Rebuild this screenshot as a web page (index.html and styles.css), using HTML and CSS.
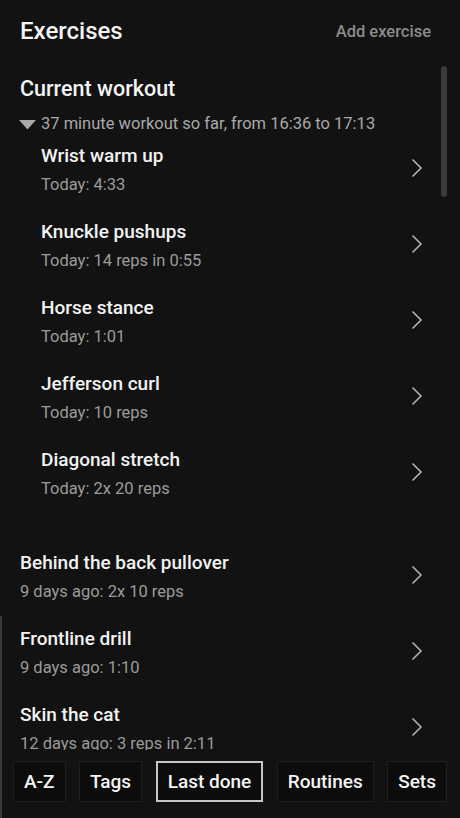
FILE: index.html
```html
<!DOCTYPE html>
<html>
  <head>
    <title>Exercises</title>
    <link rel="stylesheet" href="styles.css">
  </head>
  <body>
    <div class="page">
      <header class="topbar">
        <h1>Exercises</h1>
        <a class="add" href="#">Add exercise</a>
      </header>

      <div class="list">
        <div class="scrollbar"></div>

        <section class="workout">
          <h2>Current workout</h2>
          <div class="summary">
            <svg class="caret" width="17" height="10" viewBox="0 0 17 10"><polygon points="0,0 17,0 8.5,9.5" fill="#a9a9a9"/></svg>
            37 minute workout so far, from 16:36 to 17:13
          </div>

          <ul class="items nested">
            <li class="item">
              <div class="text"><div class="name">Wrist warm up</div><div class="info">Today: 4:33</div></div>
              <svg class="chev" width="12" height="20" viewBox="0 0 12 20"><polyline points="1.5,1.5 10,10 1.5,18.5" fill="none" stroke="#b0b0b0" stroke-width="1.6"/></svg>
            </li>
            <li class="item">
              <div class="text"><div class="name">Knuckle pushups</div><div class="info">Today: 14 reps in 0:55</div></div>
              <svg class="chev" width="12" height="20" viewBox="0 0 12 20"><polyline points="1.5,1.5 10,10 1.5,18.5" fill="none" stroke="#b0b0b0" stroke-width="1.6"/></svg>
            </li>
            <li class="item">
              <div class="text"><div class="name">Horse stance</div><div class="info">Today: 1:01</div></div>
              <svg class="chev" width="12" height="20" viewBox="0 0 12 20"><polyline points="1.5,1.5 10,10 1.5,18.5" fill="none" stroke="#b0b0b0" stroke-width="1.6"/></svg>
            </li>
            <li class="item">
              <div class="text"><div class="name">Jefferson curl</div><div class="info">Today: 10 reps</div></div>
              <svg class="chev" width="12" height="20" viewBox="0 0 12 20"><polyline points="1.5,1.5 10,10 1.5,18.5" fill="none" stroke="#b0b0b0" stroke-width="1.6"/></svg>
            </li>
            <li class="item">
              <div class="text"><div class="name">Diagonal stretch</div><div class="info">Today: 2x 20 reps</div></div>
              <svg class="chev" width="12" height="20" viewBox="0 0 12 20"><polyline points="1.5,1.5 10,10 1.5,18.5" fill="none" stroke="#b0b0b0" stroke-width="1.6"/></svg>
            </li>
          </ul>
        </section>

        <ul class="items">
          <li class="item">
            <div class="text"><div class="name">Behind the back pullover</div><div class="info">9 days ago: 2x 10 reps</div></div>
            <svg class="chev" width="12" height="20" viewBox="0 0 12 20"><polyline points="1.5,1.5 10,10 1.5,18.5" fill="none" stroke="#b0b0b0" stroke-width="1.6"/></svg>
          </li>
          <li class="item">
            <div class="text"><div class="name">Frontline drill</div><div class="info">9 days ago: 1:10</div></div>
            <svg class="chev" width="12" height="20" viewBox="0 0 12 20"><polyline points="1.5,1.5 10,10 1.5,18.5" fill="none" stroke="#b0b0b0" stroke-width="1.6"/></svg>
          </li>
          <li class="item">
            <div class="text"><div class="name">Skin the cat</div><div class="info">12 days ago: 3 reps in 2:11</div></div>
            <svg class="chev" width="12" height="20" viewBox="0 0 12 20"><polyline points="1.5,1.5 10,10 1.5,18.5" fill="none" stroke="#b0b0b0" stroke-width="1.6"/></svg>
          </li>
        </ul>
      </div>

      <nav class="tabs">
        <button class="tab">A-Z</button>
        <button class="tab">Tags</button>
        <button class="tab active">Last done</button>
        <button class="tab">Routines</button>
        <button class="tab">Sets</button>
      </nav>

      <div class="edge"></div>
    </div>
  </body>
</html>
```

FILE: styles.css
```css
/* Layout
------------------------------- */

html, body
{
  margin: 0;
  padding: 0;
  background-color: #121212;
}

body
{
  font-family: Roboto, "Noto Sans", sans-serif;
  color: #f2f2f2;
}

.page
{
  position: relative;
  height: 818px;
  display: flex;
  flex-direction: column;
  overflow: hidden;
}

.topbar
{
  height: 62px;
  flex: none;
  display: flex;
  align-items: center;
  justify-content: space-between;
  padding: 0 29px 0 20px;
}

.topbar h1
{
  margin: 0;
  font-size: 24px;
  font-weight: 500;
  color: #f4f4f4;
}

.topbar .add
{
  font-size: 16.5px;
  font-weight: 500;
  color: #8c8c8c;
  text-decoration: none;
}

.list
{
  position: relative;
  flex: 1;
  overflow: hidden;
}

.scrollbar
{
  position: absolute;
  top: 4px;
  right: 13px;
  width: 6px;
  height: 131px;
  border-radius: 3px;
  background-color: #3b3b3b;
}

/* Current workout
------------------------------- */

.workout h2
{
  margin: 13px 0 0 20px;
  font-size: 21.5px;
  line-height: 28px;
  font-weight: 500;
  color: #f4f4f4;
}

.summary
{
  margin: 13px 0 0 19px;
  font-size: 16.5px;
  line-height: 16px;
  color: #a9a9a9;
  display: flex;
  align-items: center;
  gap: 5px;
}

.caret
{
  margin-top: 1px;
}

/* Items
------------------------------- */

.items
{
  list-style: none;
  margin: 0;
  padding: 0;
}

.items.nested
{
  margin-bottom: 27px;
}

.item
{
  display: flex;
  align-items: center;
  justify-content: space-between;
  padding: 12px 37px 12px 20px;
}

.nested .item
{
  padding-left: 41px;
}

.name
{
  font-size: 19px;
  line-height: 24px;
  font-weight: 500;
  color: #f2f2f2;
}

.info
{
  margin-top: 6px;
  font-size: 16.5px;
  line-height: 22px;
  color: #9b9b9b;
}

.chev
{
  margin-top: -4px;
}

/* Tabs
------------------------------- */

.tabs
{
  flex: none;
  height: 68px;
  box-sizing: border-box;
  padding: 11px 13px 0 13px;
  display: flex;
  justify-content: space-between;
  align-items: flex-start;
  background-color: #121212;
}

.tab
{
  height: 41px;
  padding: 0 10px;
  font-family: Roboto, "Noto Sans", sans-serif;
  font-size: 19px;
  font-weight: 500;
  color: #f4f4f4;
  background-color: #0c0c0c;
  border: 1px solid #1f1f1f;
}

.tab.active
{
  border: 2px solid #c6c6c6;
}

.edge
{
  position: absolute;
  left: 0;
  top: 616px;
  bottom: 0;
  width: 2px;
  background-color: #3a3a3a;
}
```
